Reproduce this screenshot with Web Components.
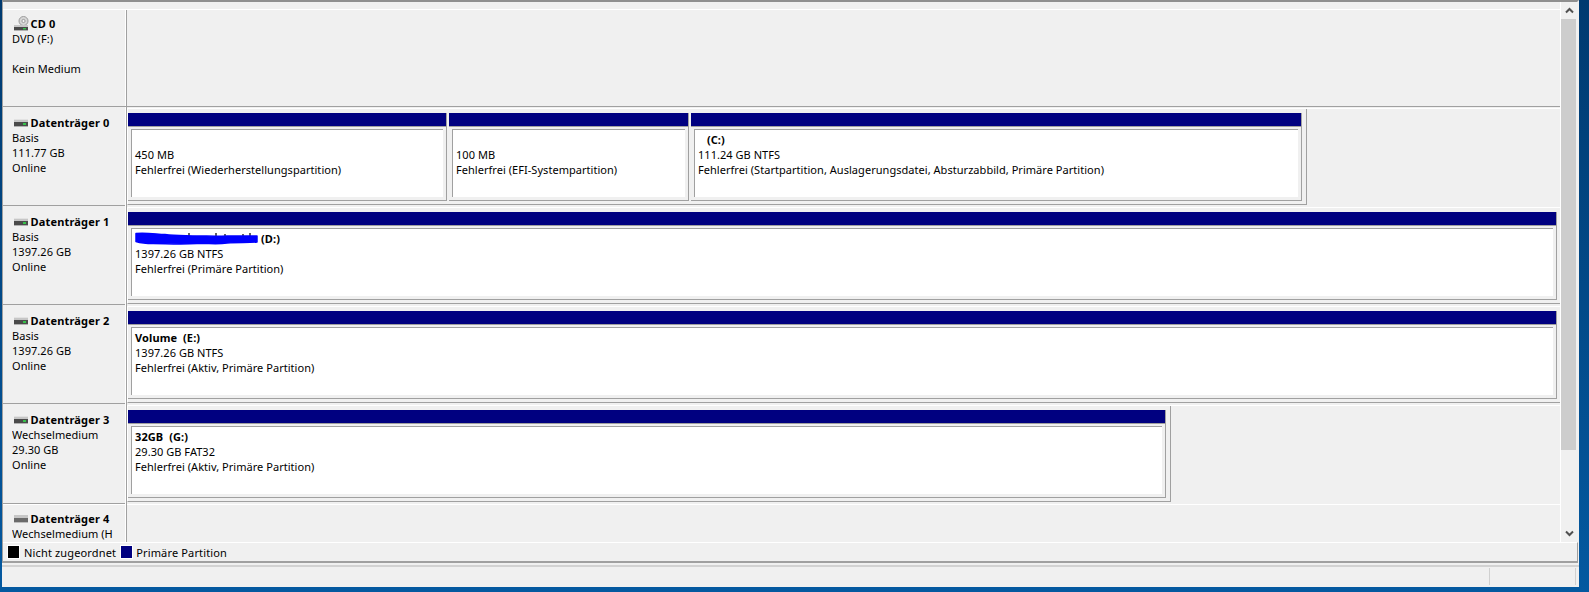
<!DOCTYPE html>
<html lang="de"><head><meta charset="utf-8"><title>Datenträgerverwaltung</title>
<style>html,body{margin:0;padding:0;height:100%;overflow:hidden}</style>
</head><body>
<disk-window>
  <disk-row name="CD 0" icon="cd" first height="98" lines="DVD (F:)||Kein Medium"></disk-row>
  <disk-row name="Datenträger 0" height="99" lines="Basis|111.77 GB|Online">
    <disk-frame width="1180">
      <disk-part width="319" size="450 MB" status="Fehlerfrei (Wiederherstellungspartition)"></disk-part>
      <disk-part width="240" size="100 MB" status="Fehlerfrei (EFI-Systempartition)"></disk-part>
      <disk-part grow title-text="   (C:)" size="111.24 GB NTFS" status="Fehlerfrei (Startpartition, Auslagerungsdatei, Absturzabbild, Primäre Partition)"></disk-part>
    </disk-frame>
  </disk-row>
  <disk-row name="Datenträger 1" height="99" lines="Basis|1397.26 GB|Online">
    <disk-frame width="1435">
      <disk-part grow redacted title-text=" (D:)" size="1397.26 GB NTFS" status="Fehlerfrei (Primäre Partition)"></disk-part>
    </disk-frame>
  </disk-row>
  <disk-row name="Datenträger 2" height="99" lines="Basis|1397.26 GB|Online">
    <disk-frame width="1435">
      <disk-part grow title-text="Volume  (E:)" size="1397.26 GB NTFS" status="Fehlerfrei (Aktiv, Primäre Partition)"></disk-part>
    </disk-frame>
  </disk-row>
  <disk-row name="Datenträger 3" height="100" lines="Wechselmedium|29.30 GB|Online">
    <disk-frame width="1044">
      <disk-part grow title-text="32GB  (G:)" size="29.30 GB FAT32" status="Fehlerfrei (Aktiv, Primäre Partition)"></disk-part>
    </disk-frame>
  </disk-row>
  <disk-row name="Datenträger 4" icon="off" last lines="Wechselmedium (H"></disk-row>
</disk-window>
<script>
const FONT = '"Noto Sans","Liberation Sans",sans-serif';
const esc = s => s.replace(/&/g,'&amp;').replace(/</g,'&lt;');

class DiskWindow extends HTMLElement {
  constructor(){ super(); this.attachShadow({mode:'open'}).innerHTML = `
  <style>
    :host{display:flex;box-sizing:border-box;width:1589px;height:592px;padding:0 10px 5px 2px;
      background:linear-gradient(180deg,#003a70 0%,#0459a0 100%);font:11px/15px ${FONT};color:#000;letter-spacing:.04px}
    .win{flex:1;min-width:0;display:flex;flex-direction:column;background:#f0f0f0}
    .panel{flex:1;min-height:0;display:flex;flex-direction:column;border-top:2px solid #8f8f8f;border-left:1px solid #a0a0a0;border-right:2px solid #f0f0f0}
    .pad{height:7px;flex:none}
    .main{flex:1;min-height:0;display:flex}
    .rows{flex:1;min-width:0;display:flex;flex-direction:column;overflow:hidden}
    .bar{flex:none;width:16px;margin-top:-7px;border-left:1px solid #fff;display:flex;flex-direction:column;background:#f0f0f0}
    .btn{height:17px;display:flex;align-items:center;justify-content:center;flex:none}
    .thumb{height:431px;flex:none;background:#cdcdcd;margin-right:1px}
    .track{flex:1}
    .legend{flex:none;height:18px;margin-right:-1px;border-top:1px solid #fff;border-bottom:2px solid #a0a0a0;border-right:1px solid #a0a0a0;display:flex;align-items:center;padding-left:4px}
    .sw{width:11px;height:12px;border:1px solid #fff;margin-right:4px;flex:none}
    .lt{margin-right:4px;letter-spacing:.15px}
    .status{flex:none;height:22px;margin-top:2px;border-top:2px solid #d2d2d2;display:grid;grid-template-columns:1488px 86px 1fr;padding-top:1px;box-sizing:border-box}
    .status span{border-right:1px solid #d0d0d0;margin-bottom:2px}
  </style>
  <div class="win">
    <div class="panel">
      <div class="pad"></div>
      <div class="main">
        <div class="rows"><slot></slot></div>
        <div class="bar">
          <div class="btn"><svg width="9" height="7" viewBox="0 0 9 7"><path d="M1 5.5 4.5 2 8 5.5" fill="none" stroke="#505050" stroke-width="2"/></svg></div>
          <div class="thumb"></div>
          <div class="track"></div>
          <div class="btn"><svg width="9" height="7" viewBox="0 0 9 7"><path d="M1 1.5 4.5 5 8 1.5" fill="none" stroke="#505050" stroke-width="2"/></svg></div>
        </div>
      </div>
      <div class="legend">
        <div class="sw" style="background:#000"></div><div class="lt">Nicht zugeordnet</div>
        <div class="sw" style="background:#000080;margin-right:3px"></div><div class="lt">Primäre Partition</div>
      </div>
    </div>
    <div class="status"><span></span><span></span><span style="border:0"></span></div>
  </div>`; }
}

const ICONS = {
  hdd:`<svg width="14" height="8" viewBox="0 0 14 8"><rect width="14" height="3" fill="#c6c6c6"/><rect width="14" height="1" fill="#e2e2e2"/><rect y="3" width="14" height="4" fill="#4a4a4a"/><rect y="7" width="14" height="1" fill="#b0b0b0"/><rect x="9" y="4" width="3" height="2" fill="#36c24a"/></svg>`,
  off:`<svg width="14" height="8" viewBox="0 0 14 8"><rect width="14" height="3" fill="#c6c6c6"/><rect y="3" width="14" height="4" fill="#6a6a6a"/><rect y="7" width="14" height="1" fill="#bdbdbd"/></svg>`,
  cd:`<svg width="15" height="15" viewBox="0 0 15 15"><circle cx="9.5" cy="5" r="4.5" fill="#d6d6d6" stroke="#9a9a9a"/><circle cx="9.5" cy="5" r="1.6" fill="#f4f4f4" stroke="#8a8a8a" stroke-width=".8"/><rect y="9" width="14" height="2" fill="#c6c6c6"/><rect y="11" width="14" height="3" fill="#4a4a4a"/><rect y="14" width="14" height="1" fill="#b0b0b0"/><rect x="9" y="12" width="3" height="1.4" fill="#36c24a"/></svg>`
};

class DiskRow extends HTMLElement {
  constructor(){ super(); this.attachShadow({mode:'open'}); }
  connectedCallback(){
    const lines=(this.getAttribute('lines')||'').split('|');
    const first=this.hasAttribute('first'), last=this.hasAttribute('last');
    const icon=this.getAttribute('icon')||'hdd';
    const h=this.getAttribute('height');
    this.shadowRoot.innerHTML=`<style>
      :host{display:grid;grid-template-columns:122px 1px 1px 1fr;box-sizing:border-box;overflow:hidden;
        ${last?'flex:1;min-height:0;':`flex:none;height:${h}px;`}
        ${first?'border-top:1px solid #fff;border-bottom:1px solid #a0a0a0;':''}}
      .label{padding:${first||last?6:8}px 0 0 9px;box-sizing:border-box;overflow:hidden;${first||last?'':'border-bottom:1px solid #a0a0a0;'}${last?'border-top:1px solid #fff;':''}}
      .name{font-weight:700;letter-spacing:.17px;display:flex;align-items:flex-end;height:15px;white-space:pre}
      .ic{width:18.5px;padding-left:2px;box-sizing:border-box;display:flex;align-items:flex-end;height:15px}
      .ic svg{display:block;margin-bottom:${icon==='cd'?0:3}px}
      .l{height:15px;white-space:nowrap;overflow:hidden;width:105px}
      .w{background:#fff}.g{background:#a0a0a0}
      .c{${first?'':last?'border-top:1px solid #fff;':'margin-top:1px;border-top:1px solid #fff;'}min-width:0}
    </style>
    <div class="label"><div class="name"><span class="ic">${ICONS[icon]}</span>${esc(this.getAttribute('name'))}</div>
    ${lines.map(l=>`<div class="l">${esc(l)}</div>`).join('')}</div>
    <div class="w"></div><div class="g"></div>
    <div class="c"><slot></slot></div>`;
  }
}

class DiskFrame extends HTMLElement {
  constructor(){ super(); this.attachShadow({mode:'open'}); }
  connectedCallback(){
    this.shadowRoot.innerHTML=`<style>
      :host{display:flex;box-sizing:border-box;width:${this.getAttribute('width')}px;height:96px;
        border-left:1px solid #fff;border-right:1px solid #a0a0a0;border-bottom:1px solid #a0a0a0;
        padding:4px 4px 3px 0}
    </style><slot></slot>`;
  }
}

class DiskPart extends HTMLElement {
  constructor(){ super(); this.attachShadow({mode:'open'}); }
  connectedCallback(){
    const g=this.hasAttribute('grow'), w=this.getAttribute('width');
    const scribble=this.hasAttribute('redacted')?`<svg class="sc" width="123" height="15" viewBox="0 0 123 15"><path d="M54 2v3M81 2v3M90 3v2M108 3v3M115 2v3" stroke="#222" stroke-width="1.4"/><path d="M1 2.5 C10 1.5 20 3 30 3.5 C40 5 50 4.5 62 5 C72 5 80 5.5 92 5 C102 5 112 5 122 5 L122 11 C112 12 104 11 92 12 C82 13.5 72 12 62 12.5 C46 13.5 30 12.5 18 12.5 C10 12.5 6 12 1 10.5Z" fill="#0000ff" stroke="#0000ff" stroke-width="1.5" stroke-linejoin="round"/></svg>`:'';
    this.shadowRoot.innerHTML=`<style>
      :host{display:flex;flex-direction:column;box-sizing:border-box;${g?'flex:1;min-width:0;':`flex:none;width:${w}px;`}
        border-right:1px solid #a0a0a0;border-bottom:1px solid #a0a0a0;background:#f0f0f0;margin-right:2px}
      :host([grow]){margin-right:0}
      .bar{height:13px;background:#000080;flex:none}
      .rule{height:1px;background:#a0a0a0;flex:none;margin-right:-1px}
      .body{flex:1;margin:2px 3px 3px 3px;background:#fff;border-top:1px solid #a0a0a0;border-left:1px solid #a0a0a0;padding:2px 3px 0;white-space:pre;overflow:hidden}
      .t{font-weight:700;letter-spacing:.1px;height:15px;display:flex}
      .sc{display:block;flex:none}
    </style>
    <div class="bar"></div><div class="rule"></div>
    <div class="body"><div class="t">${scribble}${esc(this.getAttribute('title-text')||'')}</div><div>${esc(this.getAttribute('size')||'')}</div><div>${esc(this.getAttribute('status')||'')}</div></div>`;
  }
}
customElements.define('disk-window',DiskWindow);
customElements.define('disk-row',DiskRow);
customElements.define('disk-frame',DiskFrame);
customElements.define('disk-part',DiskPart);
</script>
</body></html>
